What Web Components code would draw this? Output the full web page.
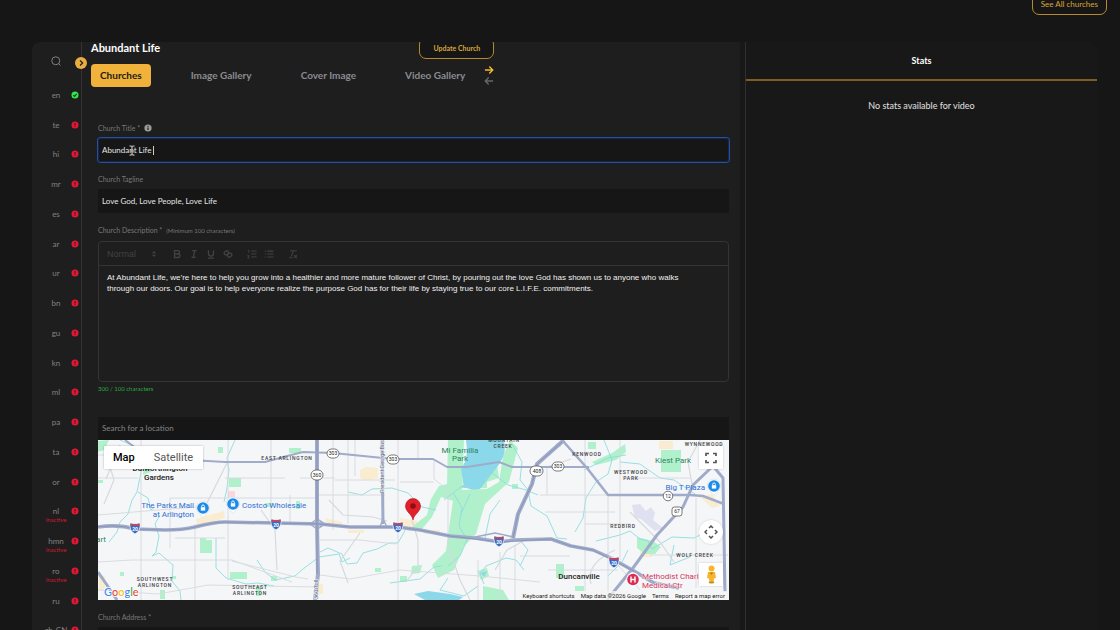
<!DOCTYPE html>
<html lang="en">
<head>
<meta charset="utf-8">
<title>Abundant Life – Churches</title>
<style>
  html, body { margin: 0; background: #161616; }
  body { font-family: Lato, "Liberation Sans", sans-serif; color: #fff; }
</style>
</head>
<body>
<church-app></church-app>

<script>
const define = (name, html, setup) => {
  const tpl = document.createElement('template');
  tpl.innerHTML = html;
  customElements.define(name, class extends HTMLElement {
    connectedCallback() {
      if (this.shadowRoot) return;
      this.attachShadow({ mode: 'open' }).append(tpl.content.cloneNode(true));
      if (setup) setup(this, this.shadowRoot);
    }
  });
};

/* Outlined gold button */
define('outline-button', `
<style>
  :host { display: block; }
  button { display: block; box-sizing: border-box; height: 22px; padding: 0 13px; border: 1px solid #b98a2c; border-radius: 7px;
    background: #161616; color: #d9a43a; font: 700 7px/20px Lato, sans-serif; white-space: nowrap; }
  :host([size="large"]) button { font-weight: 400; font-size: 8px; padding: 0 8px; }
</style>
<button type="button"><slot></slot></button>`);

/* One language in the rail */
define('lang-item', `
<style>
  :host { display: grid; grid-template-columns: 48px; position: relative; align-items: center; }
  a { display: flex; align-items: center; justify-content: center; height: 100%; color: #828282; font-size: 8px; line-height: 12px; text-decoration: none; }
  svg { position: absolute; right: 2px; top: calc(50% - 4px); width: 8px; height: 8px; }
  small { position: absolute; left: 0; width: 48px; top: calc(50% + 5px); text-align: center; font-size: 6px; line-height: 8px; color: #d0182f; }
</style>
<a href="#"><slot></slot></a>`, (host, root) => {
  const done = host.hasAttribute('done');
  root.innerHTML += done
    ? `<svg viewBox="0 0 14 14" aria-label="complete"><circle cx="7" cy="7" r="6.2" fill="#2fe84a"/><path d="M4 7.2l2.2 2.2L10 5.2" fill="none" stroke="#14351a" stroke-width="1.9"/></svg>`
    : `<svg viewBox="0 0 14 14" aria-label="missing"><circle cx="7" cy="7" r="6.2" fill="#dc1a36"/><path d="M7 3.4v4.4M7 9v1.7" stroke="#4a0c16" stroke-width="1.8"/></svg>`;
  if (host.hasAttribute('inactive')) root.innerHTML += '<small>Inactive</small>';
});

define('lang-rail', `
<style>
  :host { display: block; position: relative; border-right: 1px solid #333; }
  .find { display: flex; justify-content: center; align-items: center; width: 48px; height: 38px; padding: 0; border: 0; background: none; }
  .find svg { width: 10px; height: 10px; }
  nav { display: grid; height: 595px; grid-template-rows: repeat(20, 1fr); }
  .open { position: absolute; top: 15px; right: -6px; width: 12px; height: 12px; padding: 0; border: 0; border-radius: 50%; background: #eaae40; display: flex; align-items: center; justify-content: center; }
  .open svg { width: 8px; height: 8px; }
</style>
<button class="find" type="button" aria-label="Search languages">
  <svg viewBox="0 0 20 20" fill="none" stroke="#8a8a8a" stroke-width="1.8"><circle cx="9.5" cy="9.5" r="8"/><path d="M15 15l4 4"/></svg>
</button>
<nav></nav>
<button class="open" type="button" aria-label="Expand">
  <svg viewBox="0 0 8 8" fill="none" stroke="#222" stroke-width="1.3"><path d="M3 1.5L5.6 4L3 6.5"/></svg>
</button>`, (host, root) => {
  const langs = ['en','te','hi','mr','es','ar','ur','bn','gu','kn','ml','pa','ta','or','nl','hmn','ro','ru','zh-CN'];
  root.querySelector('nav').innerHTML = langs.map(l =>
    `<lang-item ${l === 'en' ? 'done' : ''} ${['nl','hmn','ro'].includes(l) ? 'inactive' : ''}>${l}</lang-item>`).join('');
});

/* Page title, action and tabs */
define('page-head', `
<style>
  :host { display: grid; width: max-content; margin-top: -5px; row-gap: 5px; }
  header { display: flex; justify-content: space-between; align-items: center; }
  h1 { margin: 0; font-size: 11px; line-height: 14px; font-weight: 700; }
  nav { display: flex; align-items: center; gap: 31px; }
  nav a { padding: 0 9px; font-size: 10px; line-height: 23px; font-weight: 700; color: #8b8b8f; text-decoration: none; border-radius: 4px; }
  nav a[aria-current] { background: #f0b23a; color: #1e1a12; }
  .end { display: flex; align-items: center; gap: 10px; }
  .steps { display: grid; gap: 1px; }
  .steps button { display: block; width: 10px; height: 10px; padding: 0; border: 0; background: none; }
  svg { display: block; width: 10px; height: 10px; fill: none; stroke-width: 2.2; }
</style>
<header><h1>Abundant Life</h1><outline-button>Update Church</outline-button></header>
<nav>
  <a href="#" aria-current="page">Churches</a>
  <a href="#">Image Gallery</a>
  <a href="#">Cover Image</a>
  <span class="end"><a href="#">Video Gallery</a>
    <span class="steps">
      <button type="button" aria-label="Next"><svg viewBox="0 0 16 16" stroke="#f3b92f"><path d="M1.5 8h12.5M8.5 2.5L14 8l-5.5 5.5"/></svg></button>
      <button type="button" aria-label="Previous"><svg viewBox="0 0 16 16" stroke="#66666a"><path d="M14.5 8H2M7.5 2.5L2 8l5.5 5.5"/></svg></button>
    </span>
  </span>
</nav>`);

/* Labelled text box */
define('form-field', `
<style>
  :host { display: grid; row-gap: 4px; }
  label { display: flex; align-items: center; gap: 4px; height: 12px; font-size: 7px; line-height: 12px; color: #77777a; }
  svg { width: 8px; height: 8px; }
  .box { position: relative; display: grid; }
  input { box-sizing: border-box; width: 100%; height: 24px; padding: 0 4px; border: 0; border-radius: 2px; background: #161616; color: #e4e4e4; font: 400 8px/24px Lato, sans-serif; outline: 0; }
  :host([active]) input { border-radius: 3px; box-shadow: 0 0 0 1px #23509f, inset 0 0 0 1px #15264e; }
  .caret { position: absolute; left: 55px; top: 8px; width: 1px; height: 9px; background: #ccc; }
  .beam { position: absolute; left: 30px; top: 7px; width: 8px; height: 11px; }
</style>
<label for="f"><span></span></label>
<div class="box"><input id="f" type="text"></div>`, (host, root) => {
  root.querySelector('span').textContent = host.getAttribute('label');
  root.querySelector('input').setAttribute('value', host.getAttribute('value') || '');
  if (host.hasAttribute('info'))
    root.querySelector('label').insertAdjacentHTML('beforeend', '<svg viewBox="0 0 14 14"><circle cx="7" cy="7" r="6.3" fill="#9b9b9b"/><path d="M7 3v2M7 6.2v4.500" stroke="#1e1e1e" stroke-width="2"/></svg>');
  if (host.hasAttribute('active'))
    root.querySelector('.box').insertAdjacentHTML('beforeend', '<i class="caret"></i><svg class="beam" viewBox="0 0 8 11" fill="none" stroke="#aaa" stroke-width="1.3"><path d="M1.5 .8Q4 .8 4 2.5V8.5Q4 10.2 1.5 10.2M6.5 .8Q4 .8 4 2.5M4 8.5Q4 10.2 6.5 10.2M2.5 6h3"/></svg>');
});

/* Rich text box */
define('rich-editor', `
<style>
  :host { display: grid; }
  label { height: 12px; margin-bottom: 5px; font-size: 7px; line-height: 12px; color: #77777a; white-space: pre; }
  label small { font-size: 6px; margin-left: 2px; }
  .frame { border: 1px solid #343434; border-radius: 4px; display: grid; }
  .bar { display: flex; align-items: center; height: 23px; padding-left: 8px; border-bottom: 1px solid #343434; color: #424242; }
  .pick { display: flex; align-items: center; width: 65px; }
  select { appearance: none; width: 42px; padding: 0; border: 0; background: none; color: inherit; font: 400 9px/12px "Liberation Sans", sans-serif; outline: 0; }
  .set { display: flex; gap: 7px; margin-right: 14px; }
  button { padding: 0; border: 0; width: 10px; height: 10px; background: none; color: inherit; }
  svg { display: block; width: 10px; height: 10px; fill: none; stroke: currentColor; stroke-width: 1.6; }
  textarea { display: block; box-sizing: border-box; width: 100%; height: 115px; padding: 6px 32px 6px 8px; border: 0; resize: none; outline: 0; background: none; color: #f0f0f0; font: 400 8px/11px "Liberation Sans", sans-serif; }
  output { margin-top: 3px; font-size: 6px; line-height: 8px; color: #28a745; }
</style>
<label for="d">Church Description * <small>(Minimum 100 characters)</small></label>
<div class="frame">
  <div class="bar">
    <span class="pick"><select aria-label="Text style"><option>Normal</option></select><svg viewBox="0 0 12 12"><path d="M3.5 5L6 2.5 8.5 5zM3.5 7L6 9.5 8.5 7z" fill="currentColor" stroke="none"/></svg></span>
    <span class="set">
      <button type="button" aria-label="Bold"><svg viewBox="0 0 12 12"><path d="M3 2h4a2 2 0 010 4H3zM3 6h4.5a2 2 0 010 4.2H3z"/></svg></button>
      <button type="button" aria-label="Italic"><svg viewBox="0 0 12 12"><path d="M4 2h5M3 10h5M6.800 2L5.200 10"/></svg></button>
      <button type="button" aria-label="Underline"><svg viewBox="0 0 12 12"><path d="M3 1.5v4a3 3 0 006 0v-4M2.5 11h7"/></svg></button>
      <button type="button" aria-label="Link"><svg viewBox="0 0 12 12"><path d="M5.5 6.5L3.8 7A2 2 0 012 3.6L3.5 2.4a2 2 0 013 2.2zM6.5 5.5L8.2 5a2 2 0 011.8 3.4L8.5 9.6a2 2 0 01-3-2.2z"/></svg></button>
    </span>
    <span class="set">
      <button type="button" aria-label="Numbered list"><svg viewBox="0 0 12 12"><path d="M5 2.5h6.5M5 6h6.5M5 9.5h6.5M1 1.5h1.2v3M.5 8h2L.8 10.8h2" stroke-width="1.2"/></svg></button>
      <button type="button" aria-label="Bullet list"><svg viewBox="0 0 12 12"><path d="M4 2.5h7.5M4 6h7.5M4 9.5h7.5M1 2.5h1.3M1 6h1.3M1 9.5h1.3" stroke-width="1.3"/></svg></button>
    </span>
    <button type="button" aria-label="Clear formatting"><svg viewBox="0 0 12 12"><path d="M2.5 2h8M6.5 2L4 9M1.5 10.5h4M7.5 7.5l3 3M10.5 7.5l-3 3" stroke-width="1.3"/></svg></button>
  </div>
  <textarea id="d">At Abundant Life, we’re here to help you grow into a healthier and more mature follower of Christ, by pouring out the love God has shown us to anyone who walks through our doors. Our goal is to help everyone realize the purpose God has for their life by staying true to our core L.I.F.E. commitments.</textarea>
</div>
<output for="d">300 / 100 characters</output>`);

/* Location search and map */
define('location-map', `
<style>
  :host { display: grid; }
  input { box-sizing: border-box; width: 100%; height: 23px; padding: 0 4px; border: 0; background: #161616; font: 400 8px/23px Lato, sans-serif; color: #eee; outline: 0; }
  input::placeholder { color: #858585; opacity: 1; }
  .map { position: relative; height: 160px; overflow: hidden; background: #f5f6f7; }
  .map > svg { display: block; width: 100%; height: 160px; font-family: Roboto, sans-serif; }
  .kind { position: absolute; left: 6px; top: 6px; display: flex; background: #fff; box-shadow: 0 0 2px #0004; }
  button { border: 0; padding: 0; background: #fff; }
  .kind button { height: 23px; padding: 0 10px; font: 400 11px/23px Roboto, sans-serif; color: #565656; }
  .kind button[aria-pressed="true"] { font-weight: 500; color: #000; padding: 0 9px; }
  .side { position: absolute; right: 6px; width: 24px; height: 23px; display: flex; align-items: center; justify-content: center; box-shadow: 0 0 2px #0003; }
  .full { top: 6px; } .pan { top: 80px; height: 24px; border-radius: 50%; } .man { top: 123px; }
  .legal { position: absolute; right: 0; bottom: 0; display: flex; gap: 6px; padding: 0 4px; background: #f5f5f5cc; font: 400 6px/9px Roboto, sans-serif; color: #222; }
  .legal a { color: inherit; text-decoration: none; }
  .poi { fill: #2f6fd6; font-size: 8px; } .area { fill: #3c4043; font-size: 5px; font-weight: 500; letter-spacing: .15em; }
</style>
<input type="text" placeholder="Search for a location" aria-label="Search for a location">
<div class="map">
<svg viewBox="98 440 631 160" preserveAspectRatio="xMidYMid slice">
  <defs>
    <g id="i20"><path d="M-5-5Q0-3.500 5-5Q6 3 0 6Q-6 3-5-5z" fill="#3b6bc4" stroke="#fff" stroke-width=".7"/><path d="M-4.500-4.500Q0-3 4.500-4.500L4.600-2.200H-4.600z" fill="#d24350"/><text y="3" text-anchor="middle" font-size="5" font-weight="700" fill="#fff">20</text></g>
    <g id="bag"><path d="M0 9.500L-4.500 4.500A6.600 6.600 0 114.500 4.500z" fill="#fff" stroke="#c9d3e0" stroke-width=".5"/><circle r="5.800" fill="#1c8ae8"/><path d="M-2.200-.8h4.400v3.400h-4.400z" fill="#fff"/><path d="M-1.300-1v-.8a1.300 1.300 0 012.600 0V-1" fill="none" stroke="#fff" stroke-width=".9"/></g>
  </defs>
  <rect x="98" y="440" width="631" height="160" fill="#f5f6f7"/>
  <!-- built-up areas -->
  <g fill="#faecd0">
    <path d="M196 519l28-8 1 7-28 8zM325 518l17 4v5l-14-1zM400 518l18 3-3 8-14-2zM424 530h16v4h-16zM640 545h12v12h-12zM700 497l12-3 8 12-8 2zM99 576h6v14h-6zM317 584h6v10h-6zM659 441h14v8h-14zM348 530h16v3h-16zM360 470l6-3 12 1v10l-12 3-6-3z"/>
  </g>
  <!-- parks -->
  <g fill="#b0f1cb">
    <path d="M448 440h16l-2 50 25-1 12-7 4-26 7-16 8 8-9 34-24 22-9 30-12 12-10 24-16 8-6-13 14-14 4-30 3-20-12-4-9 20-10 12-15 2 20-16 4-16 8-13 8-2z"/>
    <path d="M462 488h25v-6l12-4-2-14-33 8z"/>
    <path d="M229 478h12v9h-12zM200 538h6v2h6v13h-12zM230 572h17v7h-17zM98 441l11-1-5 10-6 2zM144 456h9l-2 16-8 3zM218 447h5v6h-5zM265 503h8v4h-8zM296 501h4v8h-4zM412 566l10-1-2 8-9 1zM172 576h4v3h-4zM400 576h7v6h-7zM289 448h12v5h-12zM120 572h4v4h-4zM256 586h5v10h-5zM271 576h6v5h-6zM375 568h6v4h-6zM160 590h5v9h-5zM98 480h5v3h-5z"/>
    <path d="M592 462l20-9 13-9 1 8-10 8-20 5zM661 450h20v22h-20zM637 537l16 4 8 6-6 7h-10l-8-6zM483 586l20 4 6 10h-26zM588 442h8v7h-8zM556 564h8v14h-8zM575 586h9v5h-9zM477 571l10-3 2 8-8 4zM512 484h6v5h-6z"/>
  </g>
  <g fill="#dfe0f0"><path d="M632 505l8-1 6 7 5-4 4 6-2 7 10 8-8 3-14-12-6-1z"/></g>
  <path d="M228 491h7v6h-7zM556 443h5v4h-5z" fill="#fbd7da"/>
  <!-- water -->
  <g fill="#8ad8ea">
    <path d="M466 440h38q3 12-4 23l-9 12-11 14q-14 3-17-7l-2-14q8-8 5-28z"/>
    <path d="M414 594l14-3 22 3 13 3-4 3h-34zM487 571l-3 6-3-4zM460 487l6-3v4z"/>
  </g>
  <g fill="none" stroke="#8fdbe0" stroke-width=".9">
    <path d="M235 440l-8 18 2 12-2 18-3 14M120 440l14 6-4 12 12 10-3 14-2 10-5 8-4 14-8 8-3 10-8 10M138 492l10 6 3 12 4-3M160 515l-5 9 4 12-3 16-4 4 7-3 14 12-1 16 8 10 1 9M216 538v30l10 10 20 6 12-1 16 3M257 560l8 12 10 8 20-4 8-7 16-12 20-3 3 8 8-4"/>
    <path d="M320 552l8-4 14 6 5 10 10-1 6-10 14-4 12-6 9 0 9-16M348 492l14 3 10-6 20-1 16 5 14 14 14 3M444 500l18-14 10 3 20-16 16 12 18 5 12 5"/>
    <path d="M454 494l8 14-3 18 8 14-7 16-12 10M470 494l-9 20M500 500l-10 14-5 24M484 584l-4-10 6-8 20-8 10 2 8 10M390 583l30-4 14-12 8-1M448 578l-8 12 24 6 14-10"/>
    <path d="M512 444l10 18-2 18 8 10 3 16 16 10 10 22 10 1M604 440l8 20-4 14-12 8-10 16-3 20-8 14M596 541l24-6 10-4 10 8 8 2 4 8 20-12 22 1 12-6 8-10M628 550l-6 12-14 14M674 545l-4 20 20-8M620 462l20 2 20 14 14 2 24 16M584 470l24-12 18-3M520 540l8 10-8 16"/>
  </g>
  <!-- streets -->
  <g fill="none" stroke="#d6d9de" stroke-width=".9">
    <path d="M141 440v160M170 498v50M195 524v76M228 440v140M271 440v84M348 440v84M355 440v36M398 440v160M418 440v20M434 459v20l14 11v56M585 440v158M620 440v120M608 495v105M547 467v28M696 498v90M515 545v55M478 560v40M500 552v48M640 590l-30-34M290 495v30M333 440v90M98 515l60-5 50-4M98 478h40M170 498h45M215 498h100M98 562l34-2 100 0 60 22M232 561l24 6 40 10 12 2M175 538h50M335 480h60M315 495h70M400 482h34M520 556h50M585 524h45M540 495h68M650 555h78M545 512h70M98 590l60 4 50-9 110 2M320 575l30 4 50-9 80 6 60 6M548 570h70M630 478h60M98 455h46M225 478h60M300 478h35M320 540h40l36 4"/>
    <path d="M108 460l6 20-10 24M120 445l-14 34M228 461l-24 48M261 510l14 20 2 40M329 500l14 15 30 2 14 4M412 520l6 20v26l-12 16M360 533l-20 28 8 22M448 546l12 34 10 20M525 540l-18 10-12 20M615 550q-30 14-24 34M547 467l24-8M630 512l30 30 14 20M700 440l-12 22 4 22" stroke-width="1.2"/>
  </g>
  <!-- highways -->
  <g fill="none" stroke="#a0abc9" stroke-linejoin="round">
    <path d="M125 440l12 9M190 460l35 2h40l22-6 16-4 30 1 30 3 30 3h40l14 8h20l32-5 13 5h77" stroke-width="2"/>
    <path d="M562 440l25 28 21 27h82l13 1 21 8" stroke-width="2.500"/>
    <path d="M98 572l9 13 10 15M607 600l26-32 24-33 26-28 10-22 20-19 10 12 2 114" stroke-width="3"/>
    <path d="M382 440l1 84" stroke-width="3"/>
    <path d="M564 440l-27 24-5 20-14 30-5 24" stroke-width="4"/>
    <path d="M317 440v84l1 50-3 26" stroke-width="4"/>
    <path d="M98 527q20-3 37 2l30 1q18 0 30-3 20-5 30-5l95 2 30 3h48l22 3 30 6 25 2 25 4 13-2 38-1 20 7 22 4 18 8 23 13 20 12 25 5" stroke-width="3.500"/>
    <path d="M475 537l20-4 18 4M380 527l3-8 4 8M310 524l7-5 8 5-8 5z" stroke-width="1.500"/>
  </g>
  <g fill="none" stroke="#8290b5" stroke-width=".8"><path d="M98 527q20-3 37 2l30 1q18 0 30-3 20-5 30-5l95 2 30 3h48l22 3 30 6 50 6 51-3 20 7 22 4 41 21M317 440v134M562 442l-25 22-5 20-14 30-5 24"/></g>
  <use href="#i20" x="135" y="528"/><use href="#i20" x="276" y="524"/><use href="#i20" x="398" y="527"/><use href="#i20" x="499" y="541"/><use href="#i20" x="614" y="562"/>
  <g fill="#fff" stroke="#555" stroke-width=".8">
    <rect x="327" y="449" width="12" height="9" rx="4.500"/><rect x="387" y="455" width="12" height="9" rx="4.500"/><rect x="311" y="470" width="12" height="10" rx="5"/><rect x="530" y="466" width="13" height="10" rx="5"/><rect x="552" y="462" width="12" height="9" rx="4.500"/><circle cx="668" cy="496" r="4.800"/><rect x="672" y="507" width="10" height="9" rx="2.500"/>
  </g>
  <g font-size="5" fill="#222" text-anchor="middle"><text x="333" y="455">303</text><text x="393" y="461">303</text><text x="317" y="477">360</text><text x="537" y="473">408</text><text x="558" y="468">303</text><text x="668" y="498">12</text><text x="677" y="513">67</text></g>
  <g text-anchor="middle" class="area">
    <text x="287" y="460">EAST ARLINGTON</text><text x="155" y="581">SOUTHWEST</text><text x="155" y="587">ARLINGTON</text><text x="250" y="589">SOUTHEAST</text><text x="250" y="595">ARLINGTON</text>
    <text x="504" y="442">MOUNTAIN</text><text x="503" y="448">CREEK</text><text x="587" y="456">KENWOOD</text><text x="631" y="474">WESTWOOD</text><text x="631" y="480">PARK</text><text x="623" y="528">REDBIRD</text><text x="695" y="557">WOLF CREEK</text><text x="704" y="446">WYNNEWOOD</text>
  </g>
  <g font-size="8" font-weight="500" fill="#222" text-anchor="middle"><text x="160" y="471">Dalworthington</text><text x="159" y="480">Gardens</text><text x="579" y="579">Duncanville</text></g>
  <g font-size="8" fill="#2a8560" text-anchor="middle"><text x="460" y="453">Mi Familia</text><text x="460" y="461">Park</text><text x="673" y="463">Kiest Park</text><text x="101" y="542">art</text><text x="496" y="605">Cedar Ridge</text></g>
  <g class="poi"><text x="194" y="508" text-anchor="end">The Parks Mall</text><text x="194" y="517" text-anchor="end">at Arlington</text><text x="242" y="508">Costco Wholesale</text><text x="705" y="490" text-anchor="end">Big T Plaza</text></g>
  <use href="#bag" x="203" y="508"/><use href="#bag" x="233" y="504"/><use href="#bag" x="714" y="486"/>
  <g font-size="5.500" fill="#4b587a" stroke="#f5f6f7" stroke-width="1" paint-order="stroke"><text transform="translate(384 493) rotate(-90)">President George Bush</text><text transform="translate(318 599) rotate(-90)">360 Toll</text></g>
  <path d="M633 588l-4-4a6.500 6.500 0 118 0z" fill="#fff"/><circle cx="633" cy="579.500" r="5.800" fill="#dc2d56"/><path d="M631 576.500v6M635 576.500v6M631 579.500h4" stroke="#fff" stroke-width="1.400"/>
  <g font-size="8" fill="#d33660" stroke="#f5f6f7" stroke-width="1" paint-order="stroke"><text x="642" y="579">Methodist Charl</text><text x="642" y="588">Medical Ctr</text></g>
  <path d="M413 520c-1-6-7.500-8-7.500-14a7.500 7.500 0 0115 0c0 6-6.500 8-7.500 14z" fill="#e0202a" stroke="#b11319" stroke-width=".6"/><circle cx="413" cy="506" r="2.800" fill="#8f0e14"/>
  <text x="104" y="596" font-size="11" font-weight="500" font-family="Lato, sans-serif" stroke="#fff" stroke-width="1.500" paint-order="stroke"><tspan fill="#4285f4">G</tspan><tspan fill="#ea4335">o</tspan><tspan fill="#fbbc05">o</tspan><tspan fill="#4285f4">g</tspan><tspan fill="#34a853">l</tspan><tspan fill="#ea4335">e</tspan></text>
</svg>
<div class="kind"><button type="button" aria-pressed="true">Map</button><button type="button">Satellite</button></div>
<button class="side full" type="button" aria-label="Full screen"><svg width="12" height="12" viewBox="0 0 12 12" fill="none" stroke="#555" stroke-width="1.700"><path d="M1 4V1.500h3M8 1.500h3V4M11 8v2.500H8M4 10.500H1V8"/></svg></button>
<button class="side pan" type="button" aria-label="Pan"><svg width="14" height="14" viewBox="0 0 14 14" fill="none" stroke="#555" stroke-width="1.500"><path d="M5 3l2-2 2 2M5 11l2 2 2-2M3 5L1 7l2 2M11 5l2 2-2 2"/></svg></button>
<button class="side man" type="button" aria-label="Street view"><svg width="11" height="19" viewBox="0 0 11 19"><circle cx="5.500" cy="3.500" r="3" fill="#f5b52d"/><path d="M2 7h7l1 6-2 .5-.5 4.500h-4L3 13.500 1 13z" fill="#f5b52d"/><path d="M3.500 7.500h4L5.500 10z" fill="#c27f12"/><ellipse cx="5.500" cy="17.500" rx="3" ry="1" fill="#c28a20"/></svg></button>
<div class="legal"><a href="#">Keyboard shortcuts</a><span>Map data ©2026 Google</span><a href="#">Terms</a><a href="#">Report a map error</a></div>
</div>`);

define('stats-panel', `
<style>
  :host { display: block; background: #181818; border-left: 1px solid #303030; text-align: center; }
  h2 { margin: 0; font-size: 9px; line-height: 37px; border-bottom: 2px solid #7f5d20; }
  p { margin: 19px 0 0; font-size: 9px; line-height: 12px; color: #e2e2e2; }
</style>
<h2>Stats</h2>
<p>No stats available for video</p>`);

define('church-app', `
<style>
  :host { display: grid; grid-template-rows: 15px 1fr; row-gap: 27px; height: 100vh; overflow: hidden; }
  .top { display: flex; justify-content: flex-end; align-items: flex-end; padding-right: 13px; min-height: 0; }
  .work { display: grid; grid-template-columns: 50px minmax(0, 1fr) 352px; min-height: 0; margin: 0 23px 0 32px; overflow: hidden; border-radius: 8px 8px 0 0; background: #1e1e1e; }
  main { overflow: hidden; padding: 0 11px 0 9px; border-right: 5px solid #181818; min-width: 0; }
  form { display: grid; row-gap: 11px; padding: 35px 0 0 7px; }
  location-map { margin-top: 13px; }
</style>
<div class="top"><outline-button size="large">See All churches</outline-button></div>
<div class="work">
  <lang-rail></lang-rail>
  <main>
    <page-head></page-head>
    <form>
      <form-field label="Church Title *" value="Abundant Life" info active></form-field>
      <form-field label="Church Tagline" value="Love God, Love People, Love Life"></form-field>
      <rich-editor></rich-editor>
      <location-map></location-map>
      <form-field label="Church Address *"></form-field>
    </form>
  </main>
  <stats-panel></stats-panel>
</div>`);
</script>
</body>
</html>
